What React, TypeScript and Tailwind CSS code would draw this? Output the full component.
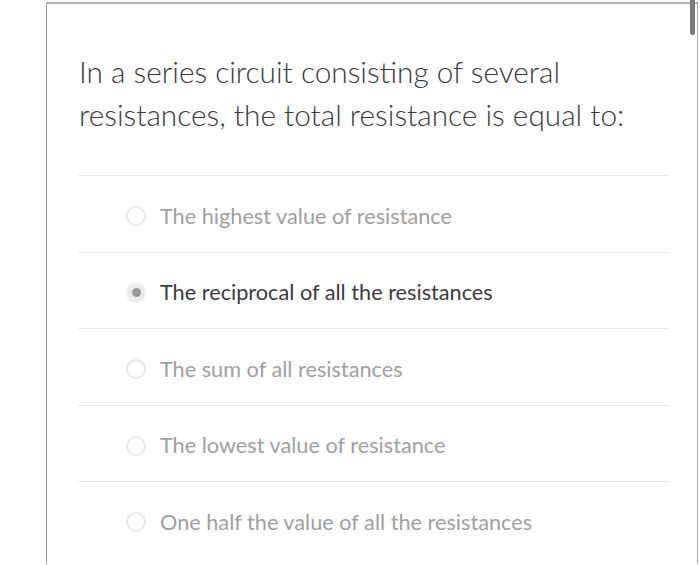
import React from "react";

const options = [
  { text: "The highest value of resistance", selected: false },
  { text: "The reciprocal of all the resistances", selected: true },
  { text: "The sum of all resistances", selected: false },
  { text: "The lowest value of resistance", selected: false },
  { text: "One half the value of all the resistances", selected: false },
];

export default function App() {
  return (
    <div className="relative w-[700px] h-[565px] bg-white overflow-hidden" style={{ fontFamily: "Lato, 'Open Sans', sans-serif" }}>
      <div className="ml-[46px] mt-[2px] w-[652px] h-[561px] border-l border-t-2 border-r border-l-[#9a9a9a] border-t-[#b0b0b0] border-r-[#a8a8a8]">
        <div className="pl-[32px] pr-[20px] pt-[46px] text-[29.8px] leading-[43px] text-[#3a3a3a] font-light whitespace-nowrap">
          In a series circuit consisting of several
          <br />
          resistances, the total resistance is equal to:
        </div>
        <div className="mt-[39px] ml-[31px] mr-[29px]">
          {options.map((o) => (
            <div key={o.text} className="border-t border-[#e6e6e6] h-[76.5px] flex items-center pl-[48px] pt-[5px]">
              {o.selected ? (
                <span className="w-[20px] h-[20px] rounded-full bg-[#ececec] flex items-center justify-center">
                  <span className="w-[9px] h-[9px] rounded-full bg-[#9a9a9a]" />
                </span>
              ) : (
                <span className="w-[20px] h-[20px] rounded-full border-2 border-[#e8e8e8]" />
              )}
              <span className={"ml-[14px] text-[21.7px] " + (o.selected ? "text-[#3c3c3c]" : "text-[#a0a0a0]")}>{o.text}</span>
            </div>
          ))}
        </div>
      </div>
      <div className="absolute left-[690px] top-0 w-[5px] h-[35px] rounded-b-full bg-[#7a7a7a]" />
    </div>
  );
}
